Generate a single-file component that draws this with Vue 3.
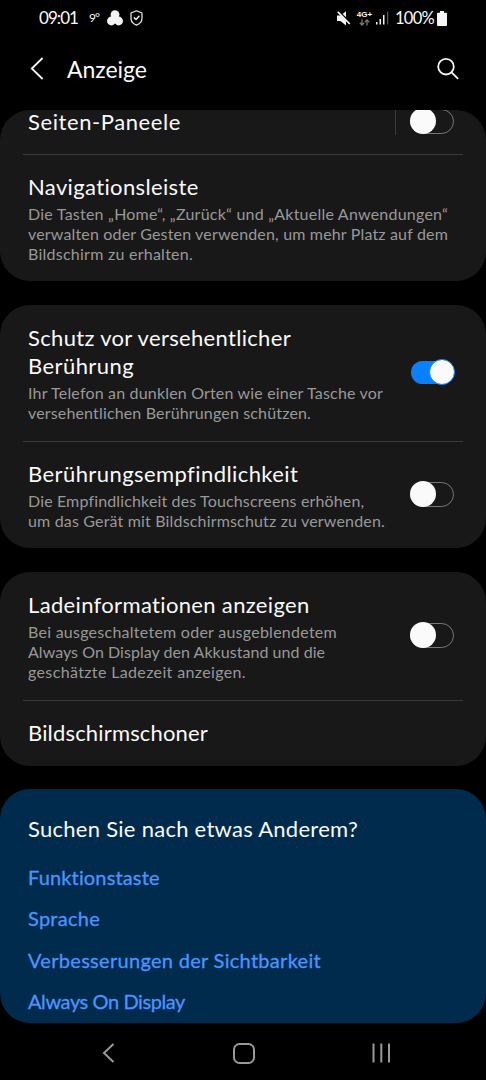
<script setup>
// Spreads the letters of a line so that it fills the given width in pixels.
const vFit = {
  mounted(el, { value }) {
    const natural = el.getBoundingClientRect().width
    const count = el.textContent.trim().length
    el.style.letterSpacing = `${(value - natural) / count}px`
  }
}

const cards = [
  {
    id: 'panels',
    rows: [
      { title: [['Seiten-Paneele', 153]], lines: [], toggle: 'off', cut: true },
      {
        title: [['Navigationsleiste', 171]],
        lines: [
          ['Die Tasten „Home“, „Zurück“ und „Aktuelle Anwendungen“', 420],
          ['verwalten oder Gesten verwenden, um mehr Platz auf dem', 420],
          ['Bildschirm zu erhalten.', 165]
        ]
      }
    ]
  },
  {
    id: 'touch',
    rows: [
      {
        title: [['Schutz vor versehentlicher', 263], ['Berührung', 106]],
        lines: [
          ['Ihr Telefon an dunklen Orten wie einer Tasche vor', 355],
          ['versehentlichen Berührungen schützen.', 283]
        ],
        toggle: 'on'
      },
      {
        title: [['Berührungsempfindlichkeit', 270]],
        lines: [
          ['Die Empfindlichkeit des Touchscreens erhöhen,', 336],
          ['um das Gerät mit Bildschirmschutz zu verwenden.', 357]
        ],
        toggle: 'off'
      }
    ]
  },
  {
    id: 'charging',
    rows: [
      {
        title: [['Ladeinformationen anzeigen', 282]],
        lines: [
          ['Bei ausgeschaltetem oder ausgeblendetem', 309],
          ['Always On Display den Akkustand und die', 297],
          ['geschätzte Ladezeit anzeigen.', 218]
        ],
        toggle: 'off'
      },
      { title: [['Bildschirmschoner', 180]], lines: [] }
    ]
  }
]

const links = [
  ['Funktionstaste', 132],
  ['Sprache', 72],
  ['Verbesserungen der Sichtbarkeit', 293],
  ['Always On Display', 157]
]
</script>

<template>
  <div class="phone">
    <div class="status">
      <span class="time"><span v-fit="39" class="fit">09:01</span></span>
      <span class="temp">9°</span>
      <svg class="clover" width="16" height="16" viewBox="0 0 16 16" fill="#f4f4f4">
        <circle cx="8" cy="4.6" r="4.4" /><circle cx="4.4" cy="11" r="4.4" /><circle cx="11.6" cy="11" r="4.4" /><circle cx="8" cy="9" r="3" />
      </svg>
      <svg class="shield" width="13" height="16" viewBox="0 0 13 16" fill="none" stroke="#eee" stroke-width="1.2" stroke-linejoin="round" stroke-linecap="round">
        <path d="M6.5 .8 12 3v5.4c0 3-2.3 5.3-5.5 6.7C3.300 13.700 1 11.400 1 8.400V3z" /><path d="m4.300 7.900 1.700 1.600 3-3.300" stroke-width="1.500" />
      </svg>
      <span class="spacer"></span>
      <svg class="mute" width="14" height="15" viewBox="0 0 14 15" fill="#f4f4f4">
        <path d="M0 4.500v5.500h3.500l5.500 4.500V9.500L4 4.500z" /><path d="M9 .2v6L5.600 3z" /><path d="m.8.8 12 12.200" stroke="#f4f4f4" stroke-width="1.700" />
      </svg>
      <span class="net">
        <b>4G+</b>
        <svg width="11" height="7" viewBox="0 0 11 7" fill="none" stroke="#777" stroke-width="1.300"><path d="M3 .3v5.500M.8 3.700 3 6l2.200-2.300M8 6.500V1M5.800 3.200 8 .9l2.200 2.300" /></svg>
      </span>
      <svg class="signal" width="13" height="14" viewBox="0 0 13 14">
        <path fill="#f4f4f4" d="M0 11h1.500v2.500H0zM3.500 8H5v5.500H3.500zM7 4h1.500v9.500H7z" /><path fill="#555" d="M11 .5h1.300v13H11z" />
      </svg>
      <span class="battery-text"><span v-fit="39" class="fit">100%</span></span>
      <svg class="battery" width="10" height="15" viewBox="0 0 10 15" fill="#f4f4f4"><path d="M3 0h4v1.800h2.200q.8 0 .8.800v11.400q0 1-1 1H1q-1 0-1-1V2.600q0-.8.800-.8H3z" /></svg>
    </div>

    <header class="header">
      <svg class="back" width="14" height="23" viewBox="0 0 14 23" fill="none" stroke="#f5f5f5" stroke-width="1.800"><path d="M12.600 1 1.800 11.500 12.600 22" /></svg>
      <h1><span v-fit="80" class="fit">Anzeige</span></h1>
      <span class="spacer"></span>
      <svg class="search" width="22" height="22" viewBox="0 0 22 22" fill="none" stroke="#f5f5f5" stroke-width="1.800"><circle cx="9" cy="8.700" r="7.800" /><path d="m14.600 14.300 6.500 6.500" /></svg>
    </header>

    <main class="list">
      <section v-for="card in cards" :key="card.id" class="card" :class="card.id">
        <div v-for="row in card.rows" :key="row.title[0][0]" class="row" :class="{ cut: row.cut }">
          <div class="texts">
            <div v-for="t in row.title" :key="t[0]" class="title"><span v-fit="t[1]" class="fit">{{ t[0] }}</span></div>
            <div v-if="row.lines.length" class="desc">
              <div v-for="l in row.lines" :key="l[0]"><span v-fit="l[1]" class="fit">{{ l[0] }}</span></div>
            </div>
          </div>
          <span v-if="row.cut" class="bar"></span>
          <span v-if="row.toggle" class="toggle" :class="row.toggle"><i></i></span>
        </div>
      </section>

      <section class="card more">
        <div class="title"><span v-fit="330" class="fit">Suchen Sie nach etwas Anderem?</span></div>
        <a v-for="l in links" :key="l[0]" class="link"><span v-fit="l[1]" class="fit">{{ l[0] }}</span></a>
      </section>
    </main>

    <nav class="nav">
      <svg width="13" height="20" viewBox="0 0 13 20" fill="none" stroke="#999" stroke-width="2"><path d="M11.500 1 2 10l9.500 9" /></svg>
      <svg width="22" height="21" viewBox="0 0 22 21" fill="none" stroke="#999" stroke-width="2"><rect x="1" y="1" width="20" height="19" rx="5.500" /></svg>
      <svg width="19" height="20" viewBox="0 0 19 20" fill="#999"><path d="M.5.500h2v19h-2zM8.300.500h2v19h-2zM16 .5h2v19h-2z" /></svg>
    </nav>
  </div>
</template>

<style>
html, body { background: #000; overflow: hidden; }
</style>

<style scoped>
.phone {
  display: flex;
  flex-direction: column;
  box-sizing: border-box;
  width: 486px;
  height: 1080px;
  overflow: hidden;
  background: #000;
  color: #fafafa;
  font-family: Lato, "Noto Sans", sans-serif;
}
.phone * { box-sizing: border-box; }
svg { display: block; flex: none; overflow: visible; }
.fit { display: inline-block; white-space: nowrap; }
.spacer { flex: 1; }
.status {
  display: flex;
  align-items: center;
  height: 36px;
  padding: 0 39px 0 39px;
  flex: none;
}
.time, .battery-text { width: 39px; font-size: 17px; line-height: 20px; white-space: nowrap; }
.temp { width: 9px; margin-left: 11px; font-size: 12px; line-height: 20px; letter-spacing: -1px; }
.clover { margin-left: 9px; }
.shield { margin-left: 7px; }
.net { width: 15px; height: 15px; margin: 0 4px 0 6px; display: flex; flex-direction: column; align-items: center; justify-content: space-between; }
.net b { font: bold 8px/8px "Liberation Sans", sans-serif; }
.battery-text { margin-left: 6px; font-size: 16.500px; }
.battery { margin-left: 3px; }
.header {
  display: flex;
  align-items: center;
  height: 74px;
  padding: 0 27px 9px 30px;
  flex: none;
}
h1 { margin: 0 0 0 23px; font-size: 23px; font-weight: 400; line-height: 28px; }
.list { display: flex; flex-direction: column; gap: 24px; height: 913px; flex: none; }
.card { border-radius: 30px; background: #181818; overflow: hidden; flex: none; }
.panels { height: 171px; }
.touch { height: 243px; }
.charging { height: 194px; }
.row { position: relative; display: flex; align-items: center; padding: 19px 32px 18px 28px; }
.row + .row::before { content: ""; position: absolute; left: 23px; right: 23px; top: 0; height: 1px; background: #3a3a3a; }
.row.cut { height: 44px; padding: 0 32px 20px 28px; }
.row.cut .title { line-height: 22px; }
.texts { flex: 1; min-width: 0; }
.title { font-size: 22px; line-height: 28px; white-space: nowrap; }
.desc { margin-top: 3px; font-size: 16px; line-height: 20px; color: #999; white-space: nowrap; }
.bar { width: 1px; height: 26px; margin-right: 14px; background: #3a3a3a; }
.toggle { position: relative; width: 44px; height: 25px; margin-top: -2px; flex: none; border: 1.500px solid #777; border-radius: 13px; }
.toggle i { position: absolute; left: -1px; top: -2px; width: 26px; height: 26px; border-radius: 50%; background: #fafafa; }
.toggle.on { width: 43px; height: 23px; border: 0; background: #0a80ff; }
.toggle.on i { left: 18px; top: -2px; border: 1px solid #0a80ff; }
.more { height: 234px; margin-top: -1px; padding: 26px 28px 0; background: #002b4d; }
.link { display: block; height: 41.500px; font-size: 20px; line-height: 28px; color: #4c94ff; -webkit-text-stroke: .3px; }
.more .title { margin-bottom: 19.500px; }
.nav { display: flex; align-items: center; flex: 1; padding: 3px 95px 0 102px; justify-content: space-between; }
</style>
